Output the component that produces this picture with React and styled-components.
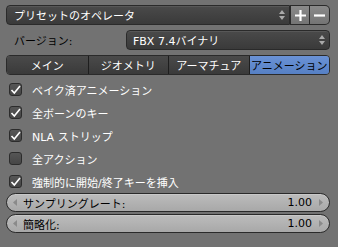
import React from 'react';
import styled, { createGlobalStyle } from 'styled-components';

const GlobalStyle = createGlobalStyle`
  html, body {
    margin: 0;
    padding: 0;
    background: #727272;
  }
  body {
    font-family: "DejaVu Sans", "Noto Sans CJK JP", sans-serif;
    font-size: 11px;
  }
`;

const Panel = styled.div`
  width: 338px;
  height: 247px;
  box-sizing: border-box;
  padding: 5px 8px 0 6px;
  display: flex;
  flex-direction: column;
  background: #727272;
  overflow: hidden;
`;

const Row = styled.div`
  display: flex;
  align-items: center;
  height: ${p => p.h || 20}px;
  margin-bottom: ${p => p.mb || 0}px;
`;

const DarkButton = styled.div`
  position: relative;
  flex: 1;
  height: 100%;
  box-sizing: border-box;
  display: flex;
  align-items: center;
  padding: 0 0 0 ${p => p.pl || 7}px;
  color: #fff;
  background: linear-gradient(#4a4a4a, #3a3a3a);
  border: 1px solid #2a2a2a;
  border-radius: ${p => p.radius || '4px'};
  box-shadow: inset 0 1px 0 rgba(255, 255, 255, 0.08);
  white-space: nowrap;
  overflow: hidden;
`;

const Arrows = styled.svg`
  position: absolute;
  right: 4px;
  top: 50%;
  transform: translateY(-50%);
`;

const IconButton = styled.div`
  width: 20px;
  height: 100%;
  box-sizing: border-box;
  display: flex;
  align-items: center;
  justify-content: center;
  background: linear-gradient(#8a8a8a, #747474);
  border: 1px solid #2a2a2a;
  border-left: ${p => (p.first ? '1px solid #2a2a2a' : 'none')};
  border-radius: ${p => p.radius || '0'};
`;

const Label = styled.div`
  width: 112px;
  padding-left: 8px;
  color: #000;
`;

const Tabs = styled.div`
  display: grid;
  grid-template-columns: repeat(4, 1fr);
  height: 20px;
  margin-bottom: 3px;
  border: 1px solid #2a2a2a;
  border-radius: 4px;
  overflow: hidden;
  box-sizing: border-box;
`;

const Tab = styled.div`
  display: flex;
  align-items: center;
  justify-content: center;
  white-space: nowrap;
  color: ${p => (p.active ? '#000' : '#fff')};
  background: ${p =>
    p.active ? 'linear-gradient(#6a92d6, #5680c4)' : 'linear-gradient(#4a4a4a, #3a3a3a)'};
  border-left: ${p => (p.first ? 'none' : '1px solid #1e1e1e')};
  overflow: hidden;
`;

const CheckRow = styled.div`
  display: flex;
  align-items: center;
  height: 23px;
  padding-left: 3px;
  color: #fff;
`;

const Box = styled.div`
  width: 13px;
  height: 13px;
  box-sizing: border-box;
  margin-right: 10px;
  border: 1px solid #2c2c2c;
  border-radius: 3px;
  background: linear-gradient(#565656, #464646);
  display: flex;
  align-items: center;
  justify-content: center;
`;

const Slider = styled.div`
  height: 19px;
  box-sizing: border-box;
  display: flex;
  align-items: center;
  padding: 0 6px 0 6px;
  margin-bottom: 2px;
  color: #000;
  background: linear-gradient(#bcbcbc, #a8a8a8);
  border: 1px solid #2a2a2a;
  border-radius: 10px;
  box-shadow: inset 0 1px 0 rgba(255, 255, 255, 0.2);
`;

const SliderText = styled.span`
  flex: 1;
  padding-left: 5px;
`;

const Value = styled.span`
  padding-right: 6px;
`;

const Tri = ({ dir }) => (
  <svg width="5" height="7" viewBox="0 0 5 7">
    <path d={dir === 'left' ? 'M4 0 L0 3.5 L4 7 Z' : 'M1 0 L5 3.5 L1 7 Z'} fill="#8a8a8a" />
  </svg>
);

const UpDown = () => (
  <Arrows width="6" height="12" viewBox="0 0 6 12">
    <path d="M0 5 L3 1 L6 5 Z" fill="#aaa" />
    <path d="M0 7 L3 11 L6 7 Z" fill="#aaa" />
  </Arrows>
);

const Check = ({ on }) => (
  <Box>
    {on && (
      <svg width="11" height="10" viewBox="0 0 11 10">
        <path d="M1.5 5 L4.3 8 L10 1" fill="none" stroke="#fff" strokeWidth="1.6" />
      </svg>
    )}
  </Box>
);

const options = [
  ['ベイク済アニメーション', true],
  ['全ボーンのキー', true],
  ['NLA ストリップ', true],
  ['全アクション', false],
  ['強制的に開始/終了キーを挿入', true],
];

export default function App() {
  return (
    <>
      <GlobalStyle />
      <Panel>
        <Row mb={5}>
          <DarkButton radius="4px 0 0 4px">
            プリセットのオペレータ
            <UpDown />
          </DarkButton>
          <IconButton first>
            <svg width="13" height="13" viewBox="0 0 13 13">
              <path d="M6.5 1 V12 M1 6.5 H12" stroke="#fff" strokeWidth="2.2" />
            </svg>
          </IconButton>
          <IconButton radius="0 5px 5px 0">
            <svg width="13" height="13" viewBox="0 0 13 13">
              <path d="M1 6.5 H12" stroke="#fff" strokeWidth="2.2" />
            </svg>
          </IconButton>
        </Row>
        <Row mb={5}>
          <Label>バージョン:</Label>
          <DarkButton pl={6}>
            FBX 7.4バイナリ
            <UpDown />
          </DarkButton>
        </Row>
        <Tabs>
          <Tab first>メイン</Tab>
          <Tab>ジオメトリ</Tab>
          <Tab>アーマチュア</Tab>
          <Tab active>アニメーション</Tab>
        </Tabs>
        {options.map(([text, on]) => (
          <CheckRow key={text}>
            <Check on={on} />
            {text}
          </CheckRow>
        ))}
        <Slider>
          <Tri dir="left" />
          <SliderText>サンプリングレート:</SliderText>
          <Value>1.00</Value>
          <Tri dir="right" />
        </Slider>
        <Slider>
          <Tri dir="left" />
          <SliderText>簡略化:</SliderText>
          <Value>1.00</Value>
          <Tri dir="right" />
        </Slider>
      </Panel>
    </>
  );
}
